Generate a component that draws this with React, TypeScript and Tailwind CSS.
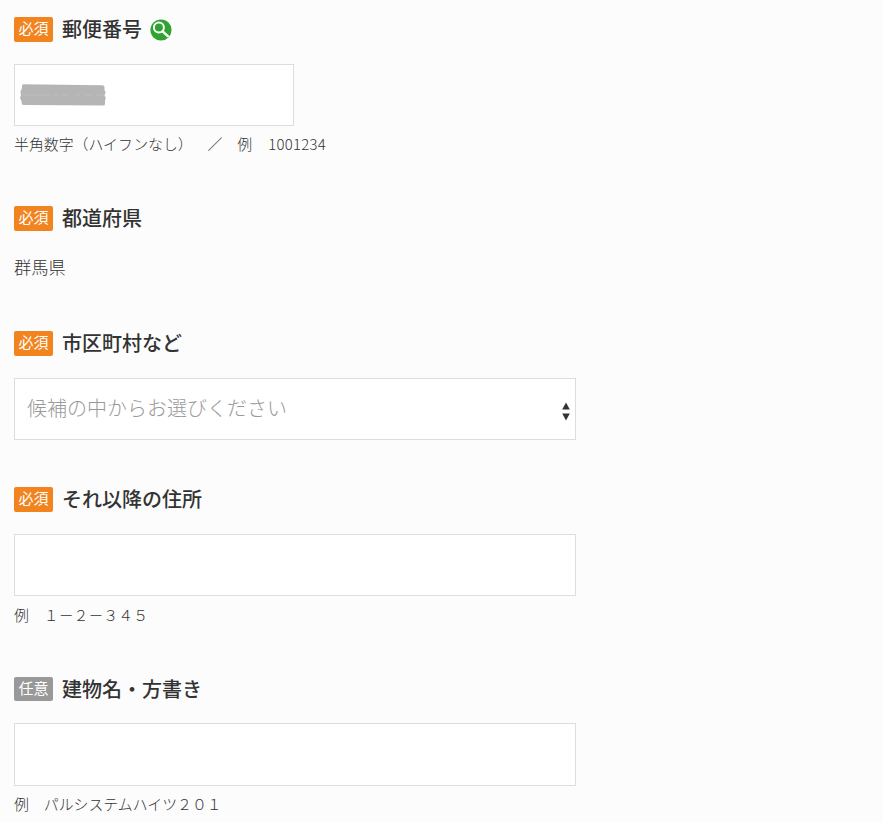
import type { ReactNode } from "react";

interface FieldProps {
    label: string;
    required?: boolean;
    icon?: ReactNode;
    hint?: ReactNode;
    className?: string;
    children: ReactNode;
}

function SearchIcon() {
    return (
        <svg className="w-[22px] h-[22px] ml-2" viewBox="0 0 22 22" fill="none">
            <circle cx="11" cy="11" r="10.6" fill="#2fa32f" />
            <circle cx="8.9" cy="8.6" r="5" stroke="#fff" strokeWidth="2" />
            <path d="M12.6 12.3l5.2 4.9" stroke="#fff" strokeWidth="2.5" strokeLinecap="round" />
        </svg>
    );
}

function Field({ label, required = false, icon, hint, className, children }: FieldProps) {
    return (
        <section className={className}>
            <div className="flex items-center h-[25px] mb-[22px]">
                <span
                    className={`flex justify-center w-[39px] rounded-[2px] text-[15px] leading-[22px] font-normal text-white ${
                        required ? "h-[25px] bg-[#f28420]" : "h-6 mb-px bg-[#999999]"
                    }`}
                >
                    {required ? "必須" : "任意"}
                </span>
                <h2 className="ml-[9px] pb-0.5 text-[20px] leading-[25px] font-medium whitespace-nowrap">{label}</h2>
                {icon}
            </div>
            {children}
            {hint && <p className="mt-[7px] text-[14.9px] leading-[22px] whitespace-nowrap">{hint}</p>}
        </section>
    );
}

export default function App() {
    return (
        <main className="h-[822px] overflow-hidden bg-[#fcfcfc] pl-[14px] pt-[17px] font-['Noto_Sans_CJK_JP',sans-serif] font-light text-[#333333] [text-spacing-trim:space-all]">
            <Field
                label="郵便番号"
                required
                icon={<SearchIcon />}
                hint={
                    <>
                        半角数字（ハイフンなし）　／　例　<span className="ml-px tracking-[0.3px]">1001234</span>
                    </>
                }
            >
                <div className="flex items-center w-[280px] h-[62px] pl-[5px] bg-white border border-[#dddddd]">
                    {/* Masked postal code */}
                    <svg className="w-[86px] h-[22px]" viewBox="0 0 86 22">
                        <path
                            d="M3 0.3L82 1.2Q84.5 1.2 84.5 3V6L85.7 8.5L84.5 11L85.7 14L85 17V20Q85 21.7 83 21.6L3 21Q1.5 20.5 1.5 17L0 14L1 11L0.3 8L2 4Q1.5 1 3 0.3Z"
                            fill="#b5b5b5"
                        />
                        <path d="M2 11H30M34 11H38M42 11H48M54 11H60M65 11H72M76 11H84" stroke="#c4c4c4" strokeWidth="0.6" />
                    </svg>
                </div>
            </Field>

            <Field label="都道府県" required className="mt-[51px]">
                <p className="h-[22px] mt-[25px] text-[17.3px] leading-[22px]">群馬県</p>
            </Field>

            <Field label="市区町村など" required className="mt-[53px]">
                <button className="flex items-center justify-between w-[562px] h-[62px] pl-3 pr-[5px] bg-white border border-[#dddddd]">
                    <span className="pb-0.5 text-[20px] leading-[30px] text-[#999999]">候補の中からお選びください</span>
                    <svg className="w-2 h-[19px] mt-1" viewBox="0 0 8 19" fill="#333333">
                        <path d="M4 0.5L7.8 7.5H0.2Z" />
                        <path d="M0.2 11.5H7.8L4 18.5Z" />
                    </svg>
                </button>
            </Field>

            <Field
                label="それ以降の住所"
                required
                className="mt-[47px]"
                hint={<span className="relative top-px">例　１－２－３４５</span>}
            >
                <input className="block w-[562px] h-[62px] px-3 text-[20px] bg-white border border-[#dddddd] outline-none" />
            </Field>

            <Field label="建物名・方書き" className="mt-[52px]" hint="例　パルシステムハイツ２０１">
                <input className="block w-[562px] h-[63px] -mt-px px-3 text-[20px] bg-white border border-[#dddddd] outline-none" />
            </Field>
        </main>
    );
}
